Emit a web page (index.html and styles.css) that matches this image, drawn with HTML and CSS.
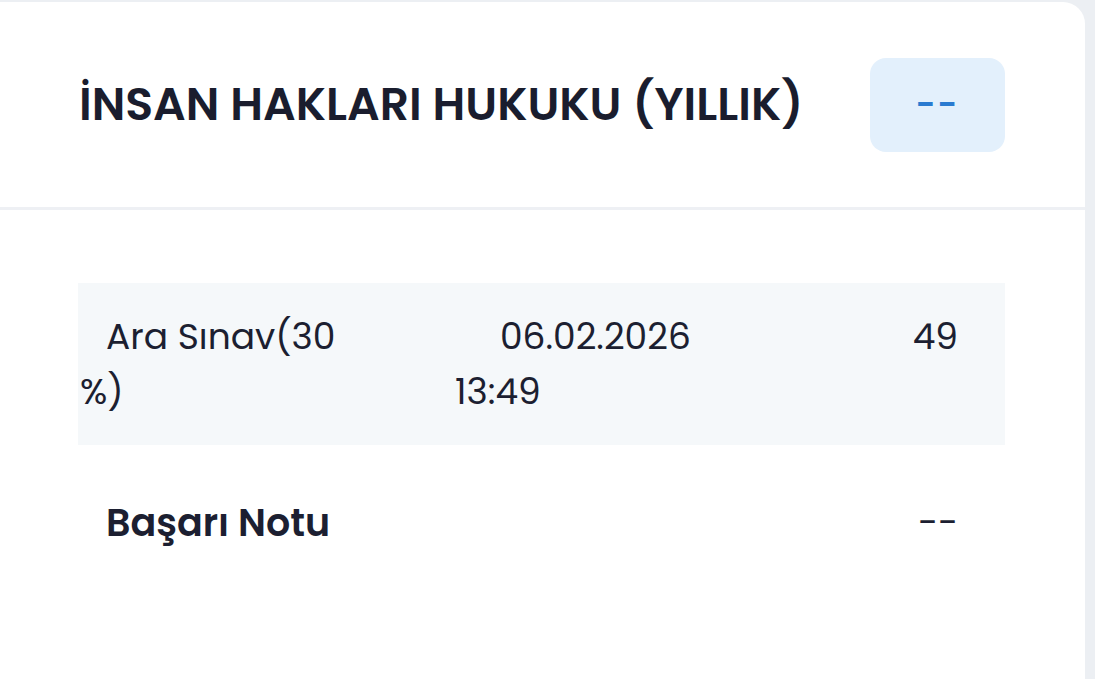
FILE: index.html
```html
<!DOCTYPE html>
<html lang="tr">
<head>
    <meta charset="UTF-8">
    <meta name="viewport" content="width=device-width, initial-scale=1.0">
    <title>Notlar</title>
    <link rel="stylesheet" href="styles.css">
</head>
<body>
    <div class="card">
        <div class="card-header">
            <h1>İNSAN HAKLARI HUKUKU (YILLIK)</h1>
            <button class="grade-btn">--</button>
        </div>

        <div class="card-body">
            <div class="grade-row shaded">
                <div class="cell cell-name">Ara Sınav(30 %)</div>
                <div class="cell cell-date">06.02.2026 13:49</div>
                <div class="cell cell-score">49</div>
            </div>
            <div class="grade-row total">
                <div class="cell cell-name">Başarı Notu</div>
                <div class="cell cell-date"></div>
                <div class="cell cell-score">--</div>
            </div>
        </div>
    </div>
</body>
</html>
```

FILE: styles.css
```css
body {
    font-family: "Poppins", Inter, "Noto Sans", sans-serif;
    background-color: #eceff3;
    margin: 0;
    padding: 0;
    color: #1c1f31;
}

.card {
    width: 1085px;
    height: 677px;
    margin-top: 2px;
    background: #fff;
    border-radius: 0 22px 0 0;
}

.card-header {
    display: flex;
    align-items: center;
    justify-content: space-between;
    height: 205px;
    padding: 0 80px 0 79px;
    border-bottom: 3px solid #eef0f4;
}

h1 {
    margin: 0;
    font-size: 45.7px;
    font-weight: 600;
    color: #1a1d2e;
}

.grade-btn {
    width: 135px;
    height: 94px;
    border: none;
    border-radius: 16px;
    background-color: #e3f0fc;
    color: #2a7bd0;
    font-family: inherit;
    font-size: 34px;
    font-weight: 600;
    letter-spacing: 2px;
    cursor: pointer;
}

.card-body {
    padding: 73px 80px 0 78px;
}

.grade-row {
    display: grid;
    grid-template-columns: 375px 250px 1fr;
    padding: 26px 47px 26px 2px;
    font-size: 36px;
    line-height: 55px;
}

.grade-row.shaded {
    background-color: #f5f8fa;
}

.cell-name {
    max-width: 285px;
    text-indent: 26px;
}

.cell-date {
    text-indent: 45px;
}

.cell-score {
    text-align: right;
}

.grade-row.total {
    padding-top: 50px;
}

.grade-row.total .cell-name {
    font-size: 38px;
    font-weight: 600;
    max-width: none;
}
```
